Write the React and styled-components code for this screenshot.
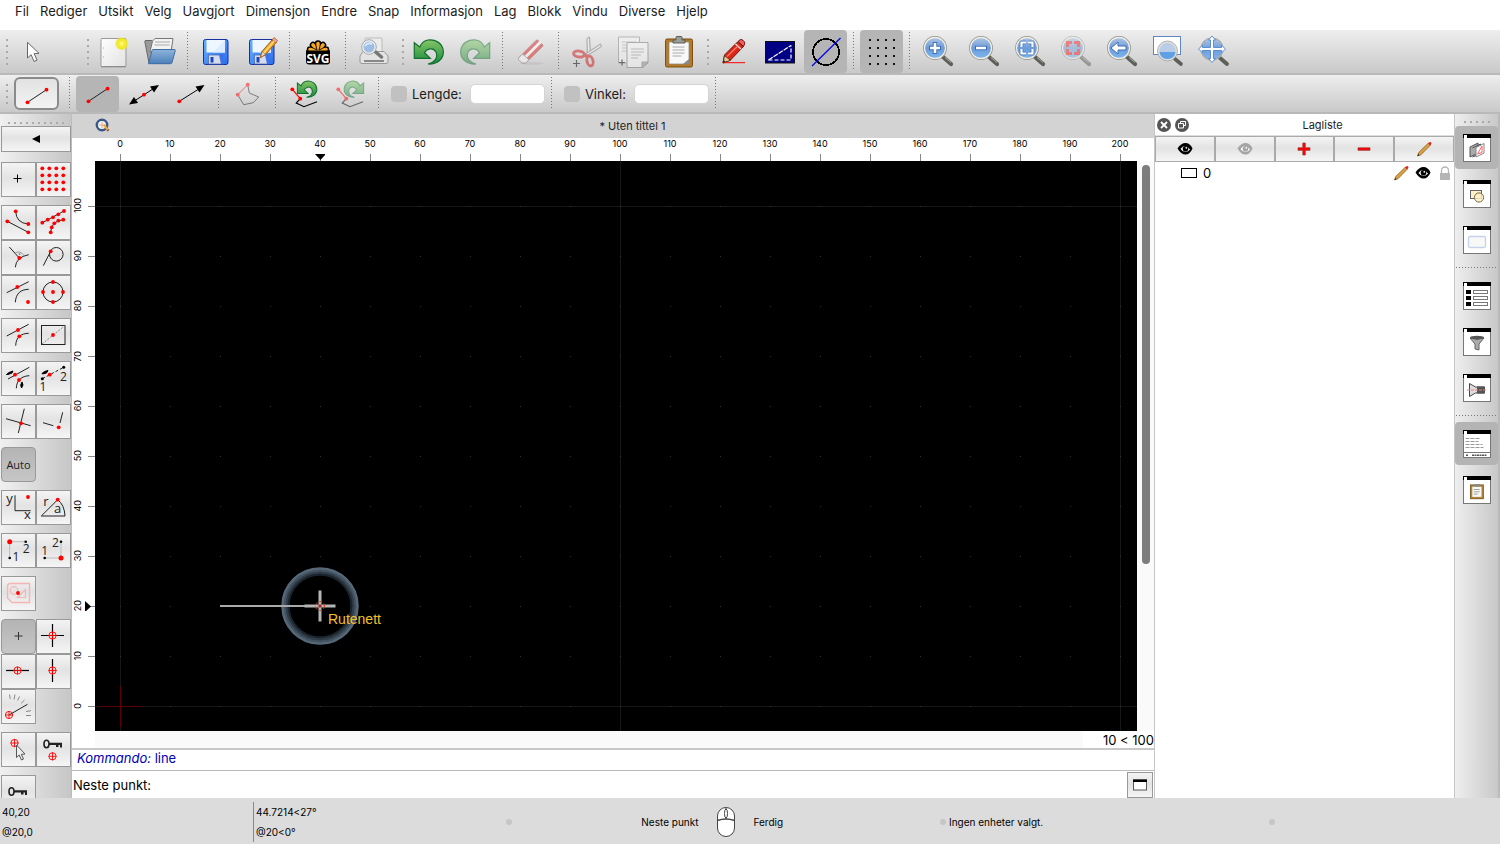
import React from 'react';
import styled, { createGlobalStyle, css } from 'styled-components';

const GlobalStyle = createGlobalStyle`
  *, *::before, *::after { box-sizing: border-box; }
  body {
    margin: 0;
    background: #fff;
    color: #1c1c1c;
    font: 13px/16px Inter, "Liberation Sans", sans-serif;
  }
  button, input { font: inherit; color: inherit; margin: 0; }
  svg { display: block; flex: none; }
`;

const RED = '#ff0000';

/* ---------- layout parts ---------- */

const Window = styled.div`
  display: flex;
  flex-direction: column;
  height: 100vh;
  overflow: hidden;
`;

const MenuBar = styled.nav`
  display: flex;
  flex: none;
  align-items: flex-start;
  gap: 11px;
  height: 30px;
  padding: 3px 15px;
`;

const MenuItem = styled.button`
  border: 0;
  padding: 0;
  background: none;
  white-space: nowrap;
`;

const Toolbar = styled.div`
  display: flex;
  flex: none;
  align-items: center;
  gap: 3px;
  height: ${(p) => (p.$compact ? 39 : 45)}px;
  padding-left: 2px;
  background: linear-gradient(#eeeeee, #c9c9c9);
  border-bottom: 2px solid #b9b9b9;
`;

const Handle = styled.span`
  flex: none;
  width: 6px;
  height: ${(p) => (p.$short ? 20 : 26)}px;
  margin-left: ${(p) => (p.$apart ? 26 : 0)}px;
  background: repeating-linear-gradient(#a9a9a9 0 2px, transparent 2px 6px) right / 2px 100% no-repeat;
`;

const Separator = styled.span`
  flex: none;
  width: ${(p) => (p.$compact ? 8 : 7)}px;
  height: calc(100% - 4px);
  background: repeating-linear-gradient(#777 0 1px, transparent 1px 3px) center / 1px 100% no-repeat;
`;

const ToolButton = styled.button`
  display: grid;
  place-items: center;
  flex: none;
  width: 43px;
  height: ${(p) => (p.$compact ? 36 : 43)}px;
  padding: 0;
  border: 0;
  border-radius: 4px;
  background: ${(p) => (p.$active ? '#b5b5b5' : 'none')};
`;

const CurrentTool = styled.button`
  display: grid;
  place-items: center;
  flex: none;
  width: 45px;
  height: 33px;
  margin: 0 3px;
  padding: 0;
  border: 2px solid #8b8b8b;
  border-radius: 6px;
  background: linear-gradient(#e2e2e2, #f3f3f3);
`;

const OptionLabel = styled.label`
  display: flex;
  align-items: center;
  gap: 5px;
  margin-left: 6px;
`;

const CheckBox = styled.input`
  appearance: none;
  width: 16px;
  height: 16px;
  border-radius: 4px;
  background: #c1c1c1;
`;

const ValueInput = styled.input`
  width: 75px;
  height: 20px;
  margin-left: 5px;
  padding: 0 4px;
  border: 1px solid #d4d4d4;
  border-radius: 5px;
  background: #fff;
`;

const Workspace = styled.main`
  display: flex;
  flex: 1;
  min-height: 0;
`;

const Palette = styled.aside`
  display: flex;
  flex: none;
  flex-direction: column;
  gap: 8px;
  width: 72px;
  padding: 8px 0 0 1px;
  overflow: hidden;
  background: linear-gradient(90deg, #f0f0f0, #c6c6c6);
  border-right: 1px solid #bdbdbd;
`;

const PaletteGrip = styled.span`
  flex: none;
  align-self: center;
  width: ${(p) => (p.$small ? 26 : 56)}px;
  height: 2px;
  background: repeating-linear-gradient(90deg, #aaa 0 2px, transparent 2px 6px);
`;

const PaletteGroup = styled.div`
  display: grid;
  flex: none;
  grid-template-columns: 35px 35px;
  width: 70px;
`;

const buttonFace = css`
  border: 1px solid #999;
  background: linear-gradient(#f4f4f4, #e3e3e3 45%, #f5f5f5);
`;

const PaletteButton = styled.button`
  display: grid;
  place-items: center;
  width: 35px;
  height: 35px;
  padding: 0;
  font: 11px/14px "Open Sans", "DejaVu Sans", sans-serif;
  ${buttonFace}
  ${(p) => p.$active && css`
    border-radius: 4px;
    background: linear-gradient(#b4b4b4, #c6c6c6);
  `}
`;

const BackButton = styled.button`
  display: grid;
  place-items: center;
  flex: none;
  width: 70px;
  height: 26px;
  margin: -6px 0 2px;
  padding: 0;
  ${buttonFace}
`;

const Editor = styled.section`
  display: flex;
  flex: 1;
  flex-direction: column;
  min-width: 0;
`;

const TabBar = styled.div`
  display: flex;
  flex: none;
  align-items: center;
  height: 24px;
  padding-left: 23px;
  background: #d3d3d3;
  font-size: 11px;
`;

const TabTitle = styled.h1`
  flex: 1;
  margin: 0;
  text-align: center;
  font-size: 11px;
  font-weight: 400;
`;

const TopRuler = styled.div`
  display: flex;
  flex: none;
  height: 23px;
  padding-left: 23px;
  overflow: hidden;
  font-size: 9px;
  line-height: 12px;
  color: #000;
`;

const TopMark = styled.span`
  display: flex;
  flex: none;
  flex-direction: column;
  justify-content: space-between;
  align-items: center;
  width: 50px;
  height: 23px;
  background: linear-gradient(#888, #888) 25px 100% / 1px 7px no-repeat;
`;

const RulerRow = styled.div`
  display: flex;
  flex: 1;
  min-height: 0;
`;

const SideRuler = styled.div`
  display: flex;
  flex: none;
  flex-direction: column;
  justify-content: flex-end;
  width: 23px;
  overflow: hidden;
  font-size: 9px;
  line-height: 12px;
  color: #000;
`;

const SideMark = styled.span`
  display: flex;
  flex: none;
  align-items: center;
  justify-content: space-between;
  height: 50px;
  background: linear-gradient(#888, #888) 100% 25px / 7px 1px no-repeat;
`;

const SideText = styled.span`
  writing-mode: vertical-rl;
  transform: rotate(180deg);
`;

const Canvas = styled.svg`
  flex: 1;
  min-width: 0;
  height: 100%;
  background: #000;
`;

const ScrollTrack = styled.div`
  flex: none;
  width: 17px;
  padding: 4px 4px 4px 5px;
  background: #fafafa;
`;

const ScrollThumb = styled.div`
  width: 8px;
  height: 71%;
  border-radius: 4px;
  background: #7d7d7d;
`;

const GridRow = styled.div`
  display: flex;
  flex: none;
  height: 17px;
  padding-left: 23px;
`;

const GridTrack = styled.div`
  flex: 1;
  background: #fafafa;
`;

const GridInfo = styled.output`
  width: 71px;
  padding-top: 1px;
  text-align: right;
  white-space: nowrap;
  color: #000;
`;

const CommandLog = styled.div`
  flex: none;
  height: 23px;
  padding: 0 5px;
  border-top: 2px solid #c8c8c8;
  border-bottom: 1px solid #bbb;
  color: #0000b8;
`;

const CommandRow = styled.div`
  display: flex;
  flex: none;
  align-items: center;
  height: 27px;
  padding: 0 1px;
  color: #000;
`;

const CommandInput = styled.input`
  flex: 1;
  min-width: 0;
  height: 24px;
  margin-left: 4px;
  padding: 0;
  border: 0;
  outline: 0;
`;

const CommandButton = styled.button`
  display: grid;
  place-items: center;
  width: 26px;
  height: 26px;
  padding: 0;
  ${buttonFace}
`;

const Dock = styled.aside`
  flex: none;
  width: 301px;
  border: solid #c6c6c6;
  border-width: 0 1px;
`;

const DockHeader = styled.header`
  display: flex;
  align-items: center;
  gap: 4px;
  height: 22px;
  padding: 0 2px;
  border-bottom: 1px solid #ddd;
`;

const DockIcon = styled.button`
  width: 14px;
  height: 14px;
  padding: 0;
  border: 0;
  background: none;
`;

const DockTitle = styled.h2`
  flex: 1;
  margin: 0;
  text-align: center;
  font-size: 11px;
  font-weight: 400;
`;

const DockActions = styled.div`
  display: grid;
  grid-template-columns: repeat(5, 1fr);
`;

const DockAction = styled.button`
  display: grid;
  place-items: center;
  height: 26px;
  padding: 0;
  ${buttonFace}
  border-color: #aaa;
`;

const LayerList = styled.ul`
  margin: 0;
  padding: 0;
  list-style: none;
`;

const Layer = styled.li`
  display: flex;
  align-items: center;
  gap: 6px;
  height: 22px;
  padding: 0 1px 0 26px;
  color: #000;
`;

const LayerName = styled.span`
  flex: 1;
`;

const Swatch = styled.span`
  width: 16px;
  height: 10px;
  border: 1px solid #000;
`;

const DockBar = styled.aside`
  display: flex;
  flex: none;
  flex-direction: column;
  align-items: center;
  gap: 3px;
  width: 45px;
  padding-top: 7px;
  background: linear-gradient(90deg, #eeeeee, #c8c8c8);
  border-right: 2px solid #bababa;
`;

const BarSeparator = styled.span`
  width: 41px;
  height: 7px;
  background: repeating-linear-gradient(90deg, #777 0 1px, transparent 1px 3px) center / 100% 1px no-repeat;
`;

const BarButton = styled.button`
  display: grid;
  place-items: center;
  flex: none;
  width: 43px;
  height: 43px;
  padding: 0;
  border: 0;
  border-radius: 4px;
  background: ${(p) => (p.$active ? '#b4b4b4' : 'none')};
`;

const StatusBar = styled.footer`
  display: flex;
  flex: none;
  align-items: center;
  height: 46px;
  padding-top: 2px;
  background: #dcdcdc;
  color: #000;
  font-size: 10px;
  line-height: 12px;
`;

const Coordinates = styled.div`
  display: flex;
  flex: none;
  flex-direction: column;
  justify-content: space-between;
  width: 253px;
  height: 40px;
  padding: 4px 2px;
  ${(p) => p.$divided && css`
    border-left: 1px solid #888;
  `}
`;

const StatusDot = styled.span`
  flex: none;
  width: 6px;
  height: 6px;
  border-radius: 50%;
  background: #c6c6c6;
`;

const MouseHints = styled.div`
  display: grid;
  flex: 1;
  grid-template-columns: 1fr 55px 1fr;
  align-items: center;
  justify-items: center;
`;

const Hint = styled.span`
  justify-self: ${(p) => (p.$left ? 'end' : 'start')};
`;

const Selection = styled.span`
  flex: none;
  width: 323px;
  padding-left: 3px;
`;

const Spacer = styled.span`
  flex: none;
  width: 225px;
`;

/* ---------- drawings ---------- */

const Icon = ({ size = 32, box = size, fade, children }) => (
  <svg width={size} height={size} viewBox={`0 0 ${box} ${box}`} fill="none" stroke="none" opacity={fade ? 0.5 : 1} aria-hidden="true">
    {children}
  </svg>
);

const Gradients = () => (
  <svg width="0" height="0" style={{ position: 'absolute' }} aria-hidden="true">
    <defs>
      <linearGradient id="lens" x1="0" y1="0" x2="0" y2="1">
        <stop offset="0" stopColor="#b3c8e6" /><stop offset="0.5" stopColor="#6d9bd8" /><stop offset="1" stopColor="#7db8f2" />
      </linearGradient>
      <linearGradient id="green" x1="0" y1="0" x2="0" y2="1">
        <stop offset="0" stopColor="#86c567" /><stop offset="1" stopColor="#178a3c" />
      </linearGradient>
      <linearGradient id="paper" x1="0" y1="0" x2="1" y2="1">
        <stop offset="0" stopColor="#ffffff" /><stop offset="1" stopColor="#e2e2e2" />
      </linearGradient>
      <linearGradient id="folder" x1="0" y1="0" x2="0" y2="1">
        <stop offset="0" stopColor="#8fb4dc" /><stop offset="1" stopColor="#4c80ba" />
      </linearGradient>
      <linearGradient id="disk" x1="0" y1="0" x2="1" y2="1">
        <stop offset="0" stopColor="#66b2ff" /><stop offset="1" stopColor="#2a6cf0" />
      </linearGradient>
      <radialGradient id="glow">
        <stop offset="0" stopColor="#ffffc0" /><stop offset="0.3" stopColor="#f8f040" /><stop offset="0.7" stopColor="#f0e620" /><stop offset="1" stopColor="#f0e620" stopOpacity="0" />
      </radialGradient>
    </defs>
  </svg>
);

const Dot = ({ x, y, r = 1.9, c = RED }) => <circle cx={x} cy={y} r={r} fill={c} />;
const Dots = ({ at }) => at.map(([x, y]) => <Dot key={`${x}-${y}`} x={x} y={y} />);
const Line = ({ d, c = '#222', w = 1, ...rest }) => <path d={d} stroke={c} strokeWidth={w} fill="none" {...rest} />;
const Target = ({ x, y }) => (
  <g stroke={RED} strokeWidth="0.9">
    <circle cx={x} cy={y} r="3.6" /><path d={`M${x - 4} ${y}h8M${x} ${y - 4}v8`} />
  </g>
);
const Glyph = ({ x, y, s = 12, children }) => (
  <text x={x} y={y} fontSize={s} textAnchor="middle" fill="#222" fontFamily="Open Sans, sans-serif">{children}</text>
);

const Pointer = () => (
  <Icon><path d="M10.500 6.300V22l3.600-3.300 3 6.800 3-1.400-3-6.400 4.900-.4z" fill="#fff" stroke="#666" /></Icon>
);
const NewFile = () => (
  <Icon>
    <rect x="3" y="2.500" width="25" height="28" rx="1" fill="url(#paper)" stroke="#999" />
    <path d="M3 30.800h25" stroke="#888" />
    <path d="M5 12h1M5 21h1" stroke="#aaa" />
    <circle cx="23.700" cy="7.700" r="7" fill="url(#glow)" />
  </Icon>
);
const OpenFolder = () => (
  <Icon>
    <path d="M.8 5.500q0-1 1-1h6l2 2 18-.5-2 21H5z" fill="#9a9a9a" stroke="#666" />
    <path d="M8.500 5 11 2.500h18L27 16H6z" fill="#f2f2f2" stroke="#777" />
    <path d="M11 6h15M10.500 9h15" stroke="#aaa" />
    <path d="M8 14.500q.3-1 1-1h21.500q1 0 .8 1L28 26.500q-.3 1.200-1.300 1.200H4.500z" fill="url(#folder)" stroke="#3f6ea5" />
  </Icon>
);
const Disk = ({ pencil }) => (
  <Icon>
    <rect x="3.500" y="3.500" width="24.500" height="25" rx="2" fill="url(#disk)" stroke="#1830a0" />
    <rect x="6.500" y="4" width="18.500" height="12.500" fill="#eef6ff" />
    <path d="m25 4-12 12.500h12z" fill="#dcebff" />
    <rect x="8.500" y="19" width="15" height="9" fill="#d8dcea" stroke="#445fb0" strokeWidth="0.7" />
    <rect x="10.500" y="21" width="3" height="5.500" fill="#1848c0" />
    <path d="M19 19h4.500v9H21z" fill="#3a72e8" />
    {pencil && (
      <g>
        <path d="m14.500 21.500 1.500-6L27 3l3.500 3L19.500 18.500z" fill="#f6a823" stroke="#a85810" />
        <path d="m16 15.500 3.500 3-5 3z" fill="#f3dcb4" stroke="#7a4a1a" strokeWidth="0.600" />
        <path d="m26 4 2-2.500 3.600 3L29.500 7z" fill="#e8a8a0" stroke="#a85810" strokeWidth="0.700" />
        <path d="m17.800 17 10-11.500" stroke="#ffe08a" strokeWidth="1.200" />
      </g>
    )}
  </Icon>
);
const petals = 'M16 14V7.500M16 14l-5-5M16 14l5-5M16 13.500H8M16 13.500h8';
const SvgExport = () => (
  <Icon>
    <g stroke="#000" strokeWidth="6.500" strokeLinecap="round"><path d={petals} /></g>
    <rect x="4" y="13.500" width="24" height="15" rx="3" fill="#000" />
    <g stroke="#f9a826" strokeWidth="3.600" strokeLinecap="round"><path d={petals} /></g>
    <path d="M13.500 8 15 14M18.500 8 17 14M9 11l6 3M23 11l-6 3" stroke="#000" strokeWidth="0.900" />
    <path d="M4 14.500h24v3H4z" fill="#000" />
    <text x="16" y="27" fontSize="12" fontWeight="700" textAnchor="middle" fill="#fff" fontFamily="Open Sans, sans-serif">SVG</text>
  </Icon>
);
const PrintPreview = () => (
  <Icon>
    <path d="M7 16V3q0-1 1-1h15q1 0 1 1v13z" fill="#ececec" stroke="#bbb" />
    <path d="M5 15.500h21l4 4.500v6q0 1.500-2 1.500H4q-2 0-2-1.500v-6z" fill="#e3e3e3" stroke="#999" />
    <rect x="6" y="24" width="20" height="2" fill="#888" />
    <path d="M17 15.500 23.500 21" stroke="#777" strokeWidth="3.500" strokeLinecap="round" />
    <circle cx="11" cy="11" r="6.500" fill="#9dbde4" stroke="#eee" strokeWidth="2" />
    <circle cx="11" cy="11" r="7.300" stroke="#888" strokeWidth="0.700" />
    <path d="M7 10q3-4 7-2" stroke="#dbe8f8" strokeWidth="2" />
  </Icon>
);
const greenArrow = 'M1.300 6.700V22.300H17.300L11.500 16.800C14 12.500 20 11 23 16C25.500 22 21 27 15 28C24 28.500 31 23 30.300 15C29.500 7 22 3 15 4C11 4.600 8.500 7 6.800 11Z';
const Undo = () => <Icon><path d={greenArrow} fill="url(#green)" stroke="#12702f" strokeWidth="1.200" /></Icon>;
const Redo = () => (
  <Icon fade><g transform="matrix(-1 0 0 1 32 0)"><path d={greenArrow} fill="url(#green)" stroke="#12702f" strokeWidth="1.200" /></g></Icon>
);
const Eraser = () => (
  <Icon fade>
    <ellipse cx="17" cy="27.500" rx="12" ry="1.500" fill="#bbb" />
    <path d="M3.500 22 21 4.500q1-1 2 0l4.500 4q1 1 0 2L10.500 27H7l-3.500-3.500z" fill="#e02020" stroke="#a04040" />
    <path d="m9.500 20 15.500-15.500 2 2L11.500 22z" fill="#fff" />
    <path d="m3.500 22 4-4 6.500 6-3.500 3H7l-3.500-3.500z" fill="#fafafa" stroke="#888" />
  </Icon>
);
const Scissors = () => (
  <Icon fade>
    <path d="M16 2.500 18.500 1l.8 15-3 3.500z" fill="#eee" stroke="#666" />
    <path d="m14.500 18 15-10 1 2.500L17 19z" fill="#eee" stroke="#666" />
    <g stroke="#d01818" strokeWidth="2.800">
      <ellipse cx="8" cy="18" rx="5.500" ry="3" transform="rotate(8 8 18)" />
      <ellipse cx="19" cy="25" rx="3" ry="5" transform="rotate(-15 19 25)" />
      <path d="m12.500 18.500 4 2.500" />
    </g>
    <path d="M2 27.500h7M5.500 24v7" stroke="#000" strokeWidth="1.200" />
  </Icon>
);
const Copy = () => (
  <Icon fade>
    <path d="M1.500 1h21v26h-21z" fill="#f5f5f5" stroke="#888" />
    <path d="M5 6h14M5 9h14M5 12h6M5 15h6" stroke="#aaa" />
    <path d="M10 6.500h21V27l-5 4.500H10z" fill="#fafafa" stroke="#777" />
    <path d="M31 26h-6v5.500z" fill="#999" stroke="#777" />
    <path d="M14 13h13M14 16h13M14 19h10M14 22h7" stroke="#999" />
    <path d="M2 26.500h6M5 23.500v6" stroke="#000" strokeWidth="1.200" />
  </Icon>
);
const Paste = () => (
  <Icon>
    <rect x="2.500" y="3" width="27" height="28" rx="1.500" fill="#b5792a" stroke="#7d4e12" />
    <path d="M6 6h20v22H6z" fill="#f8f8f8" stroke="#888" strokeWidth="0.700" />
    <path d="M26 23v5h-6z" fill="#888" />
    <path d="M9.500 11h12M9.500 14h12M9.500 17h12M9.500 20h9" stroke="#aaa" />
    <path d="M10 7V4h3V1.500q0-1 1-1h4q1 0 1 1V4h3v3z" fill="#9a9e96" stroke="#5a5e56" />
  </Icon>
);
const RedPencil = () => (
  <Icon>
    <path d="m5 27 1.500-8 13.500-13.500 5.500 5L12.500 24z" fill="#e02418" stroke="#6b1410" />
    <path d="M5 27 6.500 19.500l6 4.800z" fill="#e8c890" stroke="#5a3a20" />
    <path d="m5 27 .6-3 2 1.700z" fill="#222" />
    <path d="m20 5.500 2-1.700q1.500-.8 3 .5l1 1q1.300 1.500.5 3l-1 2.200z" fill="#f06060" stroke="#6b1410" />
    <path d="m17.500 8 5.500 5" stroke="#e8d8d0" strokeWidth="1.500" />
    <path d="m9 20.500 11.500-11" stroke="#ff8070" strokeWidth="1.200" />
    <path d="M5 26.700h22" stroke={RED} />
  </Icon>
);
const MeasureArea = () => (
  <Icon>
    <rect x="1.500" y="5.500" width="29" height="21.500" fill="#000084" stroke="#111" />
    <path d="M4.500 24 27 9.500" stroke="#fff" strokeWidth="1.200" strokeDasharray="5 1" />
    <path d="M4.500 24H27V9.500" stroke="#fff" strokeWidth="1.200" strokeDasharray="4 2" />
  </Icon>
);
const DraftMode = () => (
  <Icon>
    <circle cx="16" cy="16" r="13" stroke="#000" strokeWidth="1.800" shapeRendering="crispEdges" />
    <path d="m2 30 28.500-28" stroke="#0000e8" strokeWidth="1.200" />
  </Icon>
);
const GridIcon = () => (
  <Icon>
    {[4, 12, 20, 28].flatMap((y) => [4, 12, 20, 28].map((x) => <rect key={`${x}-${y}`} x={x - 1} y={y - 1} width="2" height="2" fill="#111" />))}
  </Icon>
);
const Lens = ({ fade, children }) => (
  <Icon fade={fade}>
    <path d="m21 21 8 7" stroke="#5d6058" strokeWidth="4.200" strokeLinecap="round" />
    <path d="m23 21.500 6 5" stroke="#a5a8a0" />
    <circle cx="13" cy="12" r="11" fill="url(#lens)" stroke="#8f9088" strokeWidth="1.800" />
    <circle cx="13" cy="12" r="10.500" stroke="#efefea" strokeWidth="1.300" />
    {children}
  </Icon>
);
const ZoomIn = () => <Lens><path d="M13 6v12M7 12h12" stroke="#3a6db5" strokeWidth="4.400" /><path d="M13 7v10M8 12h10" stroke="#fff" strokeWidth="2.600" /></Lens>;
const ZoomOut = () => <Lens><path d="M7 12h12" stroke="#3a6db5" strokeWidth="4.400" /><path d="M8 12h10" stroke="#fff" strokeWidth="2.600" /></Lens>;
const brackets = 'M7.500 11V6.500H12M14 6.500h4.500V11M18.500 13v4.500H14M12 17.500H7.500V13';
const ZoomFit = () => (
  <Lens><path d={brackets} stroke="#3a6db5" strokeWidth="3.600" /><path d={brackets} stroke="#fff" strokeWidth="2.200" /></Lens>
);
const ZoomSelection = () => <Lens fade><path d={brackets} stroke="#ee2020" strokeWidth="3.200" /></Lens>;
const ZoomPrevious = () => <Lens><path d="m5 12 7-6v4h8v4h-8v4z" fill="#fff" stroke="#3a6db5" /></Lens>;
const ZoomWindow = () => (
  <Icon>
    <rect x="1.500" y=".5" width="27" height="18" fill="#fff" stroke="#5f87c2" />
    <path d="m23 23 6 5" stroke="#5d6058" strokeWidth="3.600" strokeLinecap="round" />
    <circle cx="15.500" cy="15" r="9" fill="#b9cde6" stroke="#ddd" strokeWidth="2" />
    <path d="M7.500 16h16q-1 7-8 7t-8-7" fill="#5f9fe6" />
    <circle cx="15.500" cy="15" r="10" stroke="#999" strokeWidth="0.700" />
  </Icon>
);
const panPath = 'M14 0 17.500 4h-2V11.500h8v-2.200L27.500 13l-4 3.700v-2.200h-8v8h2L14 26.500l-3.500-4h2v-8h-8v2.200L.5 13l4-3.700v2.200h8v-7.500h-2z';
const Pan = () => (
  <Icon>
    <path d="m22 22 7 6" stroke="#5d6058" strokeWidth="4" strokeLinecap="round" />
    <circle cx="14" cy="13" r="11" fill="url(#lens)" stroke="#aaa" strokeWidth="1.200" />
    <path d={panPath} fill="#fff" stroke="#4f86cf" strokeWidth="0.900" />
  </Icon>
);

const Segment = () => <Icon><Line d="M6.500 23.300 25.500 10.700" /><Dots at={[[6.5, 23.3], [25.5, 10.7]]} /></Icon>;
const Infinite = () => (
  <Icon>
    <Line d="M4 24.500 28 9" c="#000" />
    <path d="m1 26.500 9-1.500-4-6zM31 7l-9 1.500 4 6z" fill="#000" /><Dot x={16} y={16.7} />
  </Icon>
);
const Ray = () => (
  <Icon><Line d="M5.300 23.300 28 9" c="#000" /><path d="m30.500 7-9 1.500 4 6z" fill="#000" /><Dot x={5.3} y={23.3} /></Icon>
);
const ClosePolyline = () => (
  <Icon fade>
    <Line d="m6.700 16.700 6 10 9.600-2 5.400-5.700-9.400-4-1.600-8.300" /><Line d="m6.700 16.700 10-10" c={RED} />
    <Dots at={[[6.7, 16.7], [16.7, 6.7]]} />
  </Icon>
);
const PolylineStep = ({ back }) => (
  <Icon fade={!back}>
    <Line d="m12.300 20.700-4 4.300 7.700 3.700 13-5" c="#000" w={1.2} />
    <Line d="m4.300 11.300 8 9.400" c={RED} w={1.2} />
    <Dots at={[[4.3, 11.3], [12.3, 20.7]]} />
    <g transform={back ? 'translate(8.500 .5) scale(.67)' : 'matrix(-.67 0 0 .67 30.500 .5)'}>
      <path d={greenArrow} fill="url(#green)" stroke="#12702f" strokeWidth="1.500" />
    </g>
  </Icon>
);

const Key = ({ y }) => (
  <g>
    <ellipse cx="9.500" cy={y} rx="2.500" ry="3.700" stroke="#222" strokeWidth="1.600" />
    <path d={`M12 ${y - 1.3}H25V${y + 3.5}H23V${y + 1}H21.500V${y + 3}H19V${y + 1}H12Z`} fill="#222" />
  </g>
);

const tracks = [5.3, 12.3, 19.3, 26.3];
const paletteGroups = [
  [
    ['Fri plassering', <Line d="M11.500 15.500h8M15.500 11.500v8" c="#000" />],
    ['Rutenett', <Dots at={tracks.flatMap((y) => tracks.map((x) => [x, y]))} />],
  ],
  [
    ['Endepunkter', <><Line d="m5.300 15.300 21 11M13.700 5.300Q14 17 26.300 18" /><Dots at={[[5.3, 15.3], [26.3, 26.3], [13.7, 5.3], [26.3, 18]]} /></>],
    ['Punkt på objekt', <><Line d="M5.300 16.700 27 5M13.700 26.300Q14 15 26.300 13.700" /><Dots at={[[5.3, 16.7], [10.7, 13.7], [16, 11.3], [21.3, 8.3], [27, 5], [13.7, 26.3], [14.7, 21.3], [17.3, 17.3], [21.3, 14.7], [26.3, 13.7]]} /></>],
    ['Vinkelrett', <><Line d="m7.300 6 10 11M13.300 26.300Q14 16 26.700 13.700" /><Line d="M12.500 12.500q5-4 9.500 2" c="#999" /><Dot x={17.5} y={13} r={0.8} c="#666" /><Dot x={17.3} y={17} /></>],
    ['Tangent', <><circle cx="19.300" cy="13.300" r="6.800" stroke="#222" /><Line d="m6.300 24.700 7.400-14.400" /><Dot x={13.7} y={10.3} /></>],
    ['Referanse', <><Line d="m4.700 16.700 22-11M13.300 26.300C14 17 19 13.500 26.700 13.300" /><Dots at={[[15.3, 11], [26, 26]]} /></>],
    ['Senter', <><circle cx="16" cy="16" r="10" stroke="#222" /><Dots at={[[16, 16], [16, 6], [16, 26], [6, 16], [26, 16]]} /></>],
  ],
  [
    ['Midtpunkt', <><Line d="M4.700 17 26.700 5.300M13.700 26.700C14 18 19 14.500 26.700 14.300" /><Dots at={[[16, 11], [17.3, 17.3]]} /></>],
    ['Midtpunkt av to punkter', <><rect x="4.500" y="6.500" width="23.500" height="19" stroke="#222" /><Line d="m5 25 22.500-18" c="#888" strokeDasharray="2 1.500" /><Dot x={16} y={16} /></>],
  ],
  [
    ['Avstand fra ende', <><Line d="M6 17 27.300 5.300M14.300 26.300C14.500 18 20 14 27.300 13.700" /><path d="m4.500 12.500 2.500-2 4-1.500-1 2-4 1.500zM19.500 26l-.8-3 1.300-3 1 3z" fill="#000" stroke="#000" /><Dots at={[[13, 12.7], [17, 18]]} /></>],
    ['Avstand mellom to', <><Line d="M5.300 16.700 26.700 5.300" strokeDasharray="3 2" /><path d="m5 11.500 2.500-2 3.500-1-1.500 2.500-4 1z" fill="#000" stroke="#000" /><Dot x={5.3} y={16.7} c="#000" r={1.5} /><Dot x={26.7} y={5.3} c="#000" r={1.5} /><Dot x={12.7} y={12.7} /><Glyph x={6} y={29}>1</Glyph><Glyph x={26.5} y={19}>2</Glyph></>],
  ],
  [
    ['Skjæringspunkt', <><Line d="m4 13.700 24.700 7M22.300 3.700 16.300 28" /><Dot x={19} y={18.3} /></>],
    ['Skjæring manuell', <><Line d="m6 17.700 10.300 3M25.700 7.300 23 18" /><Dot x={21.7} y={22.3} /></>],
  ],
  [['Auto', 'Auto', true]],
  [
    ['Koordinat', <><Line d="M13 4.300v15.400h15.700" /><Dot x={26} y={6} /><Glyph x={7.5} y={12} s={13}>y</Glyph><Glyph x={25.3} y={28} s={13}>x</Glyph></>],
    ['Polar', <><Line d="M4.300 25 20.700 8.700Q27.500 14 28 25Z" /><Dot x={20.7} y={8.7} /><Glyph x={9} y={15} s={13}>r</Glyph><Glyph x={20.7} y={22} s={13}>a</Glyph></>],
  ],
  [
    ['Begrens X Y', <><Line d="M23.700 7.700h-16V24" c="#bbb" /><Dot x={7.7} y={7.7} r={2.5} /><Dot x={23.7} y={7.7} r={1.3} c="#000" /><Dot x={7.7} y={24} r={1.3} c="#000" /><Glyph x={14} y={27}>1</Glyph><Glyph x={24.3} y={19}>2</Glyph></>],
    ['Begrens Y X', <><Line d="M7.700 24H24V7.700" c="#bbb" /><Dot x={24} y={24} r={2.5} /><Dot x={24} y={7.7} r={1.3} c="#000" /><Dot x={7.7} y={24} r={1.3} c="#000" /><Glyph x={7.7} y={21}>1</Glyph><Glyph x={18.5} y={13}>2</Glyph></>],
  ],
  [['Tyngdepunkt', <><Line d="M5.500 9.500q0-3 3-3h19v19H10L5.500 21z" c="#f5b5b5" w={1.4} /><circle cx="12" cy="13.500" r="3.800" stroke="#f5b5b5" strokeWidth="1.200" /><Line d="M23.500 12.500v8h-8z" c="#f5b5b5" w={1.2} /><Dot x={16} y={16} /></>]],
  [
    ['Ingen begrensning', <Line d="M12.500 16h8M16.500 12v8" c="#333" />, true],
    ['Ortogonal', <><Line d="M4 15.500h23M15.500 4v23" c="#000" w={1.2} /><Target x={15.5} y={15.5} /></>],
    ['Horisontal', <><Line d="M4 15.500h23" c="#000" w={1.2} /><Target x={15.5} y={15.5} /></>],
    ['Vertikal', <><Line d="M15.500 4v23" c="#000" w={1.2} /><Target x={15.5} y={15.5} /></>],
    ['Vinkel', <><Line d="M7 25 25.500 14.300" /><Line d="M7.500 4.500 8.300 9M13 4.500 12 9.500M17.500 6.500l-2 4M22.500 10l-3.300 3.300M24 21.500l5-.8M24 25.500h5" c="#888" /><Target x={7} y={25} /></>],
  ],
  [
    ['Sett nullpunkt', <><Target x={12.5} y={10} /><path d="M14.500 12v12.500l2.700-2.500 2.300 5 2-1-2.200-4.700 3.700-.3z" fill="#eee" stroke="#555" /></>],
    ['Lås nullpunkt', <><Key y={11} /><Target x={15.5} y={23.3} /></>],
  ],
  [['Lås', <Key y={15.5} />]],
];

const EyeIcon = ({ c = '#000' }) => (
  <Icon size={16}>
    <path d="M.5 7.500Q4 2 8.500 2T15.500 7.500Q13 13.500 8.500 13.500 4 13.500.5 7.500" fill={c} />
    <path d="M3.500 8Q5.500 5 8 5t5 3.500Q10.500 11 8.500 11 5.500 11 3.500 8" fill="#fff" />
    <circle cx="8.500" cy="7.800" r="2.800" fill={c} /><circle cx="9.300" cy="6.800" r="0.900" fill="#fff" />
  </Icon>
);
const PencilIcon = () => (
  <Icon size={16}>
    <path d="m1.500 15 1.200-3.500L12.500 2l2 2L5 13.700z" fill="#dda040" stroke="#7d5520" strokeWidth="0.700" />
    <path d="m12 2.500 1.500-1.300q1.800-.6 2 1.400l-1.300 2z" fill="#e82020" /><path d="m1.500 15 .7-2 1.300 1.300z" fill="#222" />
  </Icon>
);
const PlusIcon = () => <Icon size={16}><path d="M6.800 2h2.500v4.800H14v2.500H9.300V14H6.800V9.300H2V6.800h4.800z" fill="#f00" stroke="#933" strokeWidth="0.700" /></Icon>;
const MinusIcon = () => <Icon size={16}><path d="M2 6.800h12v2.500H2z" fill="#f00" stroke="#933" strokeWidth="0.700" /></Icon>;
const LockIcon = () => (
  <Icon size={16}><path d="M4.500 8V5.500a3.500 3.500 0 0 1 7 0V8" stroke="#b5b5b5" strokeWidth="1.300" /><rect x="3" y="8" width="10" height="7" fill="#b5b5b5" /></Icon>
);
const CloseIcon = () => <Icon size={14}><circle cx="7" cy="7" r="7" fill="#555" /><path d="m4 4 6 6M10 4l-6 6" stroke="#fff" strokeWidth="1.800" /></Icon>;
const FloatIcon = () => <Icon size={14}><circle cx="7" cy="7" r="7" fill="#555" /><path d="M5.500 5.500v-2h5v4h-2M3.500 5.500h5v4.500h-5z" stroke="#fff" /></Icon>;
const DocumentIcon = () => (
  <Icon size={16}>
    <circle cx="7" cy="7" r="5.200" fill="#f4f4f4" stroke="#3d5688" strokeWidth="2.400" />
    <path d="M4 7h6M7 4v6" stroke="#e0a080" strokeWidth="0.800" />
    <path d="m8 7.500 4 5 1.500-1.500L9.500 6z" fill="#f0a830" /><path d="m12 13 2-1.500" stroke="#a04020" strokeWidth="1.500" />
  </Icon>
);
const WindowIcon = ({ children }) => (
  <Icon size={28}>
    <rect x=".5" y=".5" width="27" height="27" fill="#fff" stroke="#777" />
    <path d="M0 0h28v4H0z" fill="#000" /><path d="M1 1h3v3H1z" fill="#fff" />
    {children}
  </Icon>
);
const MiniWindow = () => <Icon size={14}><rect x=".5" y="2" width="13" height="10" fill="#fff" stroke="#555" /><path d="M0 1.500h14V4H0z" fill="#000" /></Icon>;

const dockWindows = [
  ['Lagliste', <><path d="m7 13 8-4v10l-8 4zM9.500 14l8-4v10l-8 3" fill="#aaa" stroke="#555" /><path d="m13 13.500 8-4v9.500l-8 4z" fill="#fff" stroke="#888" /><path d="m14.500 20 4.500-8v6.500z" stroke="#f66" /></>, true],
  ['Blokkliste', <><rect x="7.500" y="10.500" width="11" height="8" fill="#fdf0c8" stroke="#666" /><circle cx="16" cy="17.500" r="4.600" fill="#fdf0c8" fillOpacity="0.800" stroke="#776a40" /></>],
  ['Visninger', <rect x="5.500" y="10.500" width="17" height="11" rx="1.500" fill="#f8f8f6" stroke="#c4d3ea" strokeWidth="1.300" />],
  null,
  ['Egenskaper', <>{[8, 14, 20].map((y) => <g key={y}><rect x="3" y={y} width="5" height="4" fill="#000" /><rect x="10.500" y={y + 0.5} width="14" height="3" stroke="#777" /></g>)}</>],
  ['Filter', <><path d="M7 10q7 3 14 0l-5 6v6l-4-1v-5z" fill="#aaa" stroke="#666" /><ellipse cx="14" cy="9.500" rx="7" ry="1.800" fill="#555" /></>],
  ['Lommelykt', <><path d="M6.500 9.500v13l6-3.500h9v-6h-9z" fill="#ddd" stroke="#444" /><path d="M14 12.500h7.500v7H14z" fill="#555" /><path d="M4 16h20" stroke="#f77" strokeDasharray="3 1" /></>],
  null,
  ['Kommandolinje', <><path d="M2.500 8.500h14M2.500 11.500h13M2.500 14.500h17M2.500 17.500h18" stroke="#9a9a9a" strokeDasharray="4 1" /><path d="M1 22.500h26" stroke="#777" /><path d="M3 25.300h2M9 25.300h15" stroke="#555" strokeWidth="1.500" strokeDasharray="2 .5" /></>, true],
  ['Utklippstavle', <g transform="translate(7 8) scale(.46)"><rect x="1" y="2" width="28" height="30" fill="#b5853a" stroke="#7d5a22" strokeWidth="2" /><path d="M5 6h20v22H5z" fill="#f8f8f8" /><path d="M8 12h13M8 17h13M8 22h9" stroke="#999" strokeWidth="2" /><path d="M9 0h12v6H9z" fill="#8a8e86" /></g>],
];

/* ---------- toolbar contents ---------- */

const mainTools = [
  ['grip'], ['Pek', <Pointer />], ['grip', true],
  ['Ny', <NewFile />], ['Åpne', <OpenFolder />], ['|'],
  ['Lagre', <Disk />], ['Lagre som', <Disk pencil />], ['|'],
  ['SVG-eksport', <SvgExport />], ['|'], ['Forhåndsvisning', <PrintPreview />], ['grip'],
  ['Angre', <Undo />], ['Gjør om', <Redo />], ['|'], ['Slett', <Eraser />], ['|'],
  ['Klipp ut', <Scissors />], ['Kopier', <Copy />], ['Lim inn', <Paste />], ['grip'],
  ['Rediger', <RedPencil />], ['Mål', <MeasureArea />], ['Utkast', <DraftMode />, true], ['|'],
  ['Rutenett', <GridIcon />, true], ['|'],
  ['Zoom inn', <ZoomIn />], ['Zoom ut', <ZoomOut />], ['Autozoom', <ZoomFit />], ['Zoom til valg', <ZoomSelection />],
  ['Forrige visning', <ZoomPrevious />], ['Zoom vindu', <ZoomWindow />], ['Panorer', <Pan />],
];

const lineTools = [
  ['|'], ['Linje', <Segment />, true], ['Uendelig linje', <Infinite />], ['Stråle', <Ray />], ['|'],
  ['Lukk', <ClosePolyline />], ['|'], ['Angre segment', <PolylineStep back />], ['Gjør om segment', <PolylineStep />], ['|'],
];

const Tools = ({ items, compact }) => items.map(([name, icon, active], i) => {
  if (name === 'grip') return <Handle key={i} $apart={icon} />;
  if (name === '|') return <Separator key={i} $compact={compact} />;
  return <ToolButton key={i} type="button" aria-label={name} $active={active} $compact={compact}>{icon}</ToolButton>;
});

const menus = ['Fil', 'Rediger', 'Utsikt', 'Velg', 'Uavgjort', 'Dimensjon', 'Endre', 'Snap', 'Informasjon', 'Lag', 'Blokk', 'Vindu', 'Diverse', 'Hjelp'];
const topMarks = Array.from({ length: 21 }, (_, i) => i * 10);
const sideMarks = Array.from({ length: 11 }, (_, i) => 100 - i * 10);

const Option = ({ label }) => (
  <>
    <OptionLabel><CheckBox type="checkbox" />{label}</OptionLabel>
    <ValueInput type="text" aria-label={label} />
  </>
);

const DrawingArea = () => (
  <Canvas role="img" aria-label="Tegneflate">
    <svg x="25" y="100%" overflow="visible">
      <defs>
        <pattern id="gridDots" width="50" height="50" patternUnits="userSpaceOnUse">
          <rect width="1" height="1" fill="#333" />
        </pattern>
      </defs>
      <g transform="translate(0 -25)">
        <path d="M.5-3000V25M500.500-3000V25M1000.500-3000V25M-25 .5H3000M-25-499.500H3000" stroke="#171717" />
        <rect x="-50" y="-3000" width="4000" height="3050" fill="url(#gridDots)" />
        <path d="M-20 .5h41M.5-20v41" stroke="#5c0000" />
        <g fill="none">
          <circle cx="200" cy="-100" r="31.500" stroke="#1a232b" strokeWidth="2.500" />
          <circle cx="200" cy="-100" r="33.500" stroke="#2e3b47" strokeWidth="2.500" />
          <circle cx="200" cy="-100" r="35.500" stroke="#42525f" strokeWidth="2.500" />
          <circle cx="200" cy="-100" r="37.500" stroke="#566878" strokeWidth="2.500" />
        </g>
        <path d="M100-100h100" stroke="#a9abab" strokeWidth="2" />
        <path d="M184.500-100h31M200-115.500v31" stroke="#b5b5b5" strokeWidth="3" />
        <circle cx="200" cy="-100" r="4.500" fill="none" stroke="#d83c20" strokeDasharray="3 2" />
        <rect x="198.500" y="-101.500" width="3" height="3" fill="#a02828" />
        <text x="208" y="-82" fontSize="14" fill="#f4c22b" fontFamily="Liberation Sans, sans-serif">Rutenett</text>
      </g>
    </svg>
  </Canvas>
);

export default function App() {
  return (
    <Window>
      <GlobalStyle />
      <Gradients />
      <MenuBar>{menus.map((m) => <MenuItem key={m} type="button">{m}</MenuItem>)}</MenuBar>
      <Toolbar><Tools items={mainTools} /></Toolbar>
      <Toolbar $compact>
        <Handle $short />
        <CurrentTool type="button" aria-label="Gjeldende verktøy"><Segment /></CurrentTool>
        <Tools items={lineTools} compact />
        <Option label="Lengde:" />
        <Separator />
        <Option label="Vinkel:" />
        <Separator />
      </Toolbar>

      <Workspace>
        <Palette>
          <PaletteGrip />
          <BackButton type="button" aria-label="Tilbake"><Icon size={10}><path d="M9 1v8L1 5z" fill="#000" /></Icon></BackButton>
          {paletteGroups.map((group, i) => (
            <PaletteGroup key={i}>
              {group.map(([name, drawing, active]) => (
                <PaletteButton key={name} type="button" aria-label={name} $active={active}>
                  {typeof drawing === 'string' ? drawing : <Icon size={33}>{drawing}</Icon>}
                </PaletteButton>
              ))}
            </PaletteGroup>
          ))}
        </Palette>

        <Editor>
          <TabBar><DocumentIcon /><TabTitle>* Uten tittel 1</TabTitle></TabBar>
          <TopRuler>
            {topMarks.map((n) => (
              <TopMark key={n}>{n}{n === 40 && <Icon size={10}><path d="M0 3h11L5.500 9z" fill="#000" /></Icon>}</TopMark>
            ))}
          </TopRuler>
          <RulerRow>
            <SideRuler>
              {sideMarks.map((n) => (
                <SideMark key={n}><SideText>{n}</SideText>{n === 20 && <Icon size={10}><path d="M0 0v11l6-5.500z" fill="#000" /></Icon>}</SideMark>
              ))}
            </SideRuler>
            <DrawingArea />
            <ScrollTrack><ScrollThumb /></ScrollTrack>
          </RulerRow>
          <GridRow><GridTrack /><GridInfo>10 &lt; 100</GridInfo></GridRow>
          <CommandLog><em>Kommando:</em> line</CommandLog>
          <CommandRow>
            <label htmlFor="command">Neste punkt:</label>
            <CommandInput id="command" type="text" />
            <CommandButton type="button" aria-label="Kommandovindu"><MiniWindow /></CommandButton>
          </CommandRow>
        </Editor>

        <Dock>
          <DockHeader>
            <DockIcon type="button" aria-label="Lukk"><CloseIcon /></DockIcon>
            <DockIcon type="button" aria-label="Løsne"><FloatIcon /></DockIcon>
            <DockTitle>Lagliste</DockTitle>
          </DockHeader>
          <DockActions>
            <DockAction type="button" aria-label="Vis alle"><EyeIcon /></DockAction>
            <DockAction type="button" aria-label="Skjul alle"><EyeIcon c="#a5a5a5" /></DockAction>
            <DockAction type="button" aria-label="Nytt lag"><PlusIcon /></DockAction>
            <DockAction type="button" aria-label="Fjern lag"><MinusIcon /></DockAction>
            <DockAction type="button" aria-label="Rediger lag"><PencilIcon /></DockAction>
          </DockActions>
          <LayerList>
            <Layer><Swatch /><LayerName>0</LayerName><PencilIcon /><EyeIcon /><LockIcon /></Layer>
          </LayerList>
        </Dock>

        <DockBar>
          <PaletteGrip $small />
          {dockWindows.map((w, i) => (w
            ? <BarButton key={i} type="button" aria-label={w[0]} $active={w[2]}><WindowIcon>{w[1]}</WindowIcon></BarButton>
            : <BarSeparator key={i} />))}
        </DockBar>
      </Workspace>

      <StatusBar>
        <Coordinates><span>40,20</span><span>@20,0</span></Coordinates>
        <Coordinates $divided><span>44.7214&lt;27°</span><span>@20&lt;0°</span></Coordinates>
        <StatusDot />
        <MouseHints>
          <Hint $left>Neste punkt</Hint>
          <svg width="18" height="32" viewBox="0 0 18 32" fill="#fff" stroke="#444" aria-hidden="true">
            <rect x=".5" y="1.500" width="17" height="29" rx="8.500" />
            <path d="M.5 14.500q8.500-3 17 0" fill="none" strokeWidth="1.500" /><path d="M9 2v11" /><ellipse cx="9" cy="7.500" rx="1.500" ry="4.500" />
          </svg>
          <Hint>Ferdig</Hint>
        </MouseHints>
        <StatusDot />
        <Selection>Ingen enheter valgt.</Selection>
        <StatusDot />
        <Spacer />
      </StatusBar>
    </Window>
  );
}
